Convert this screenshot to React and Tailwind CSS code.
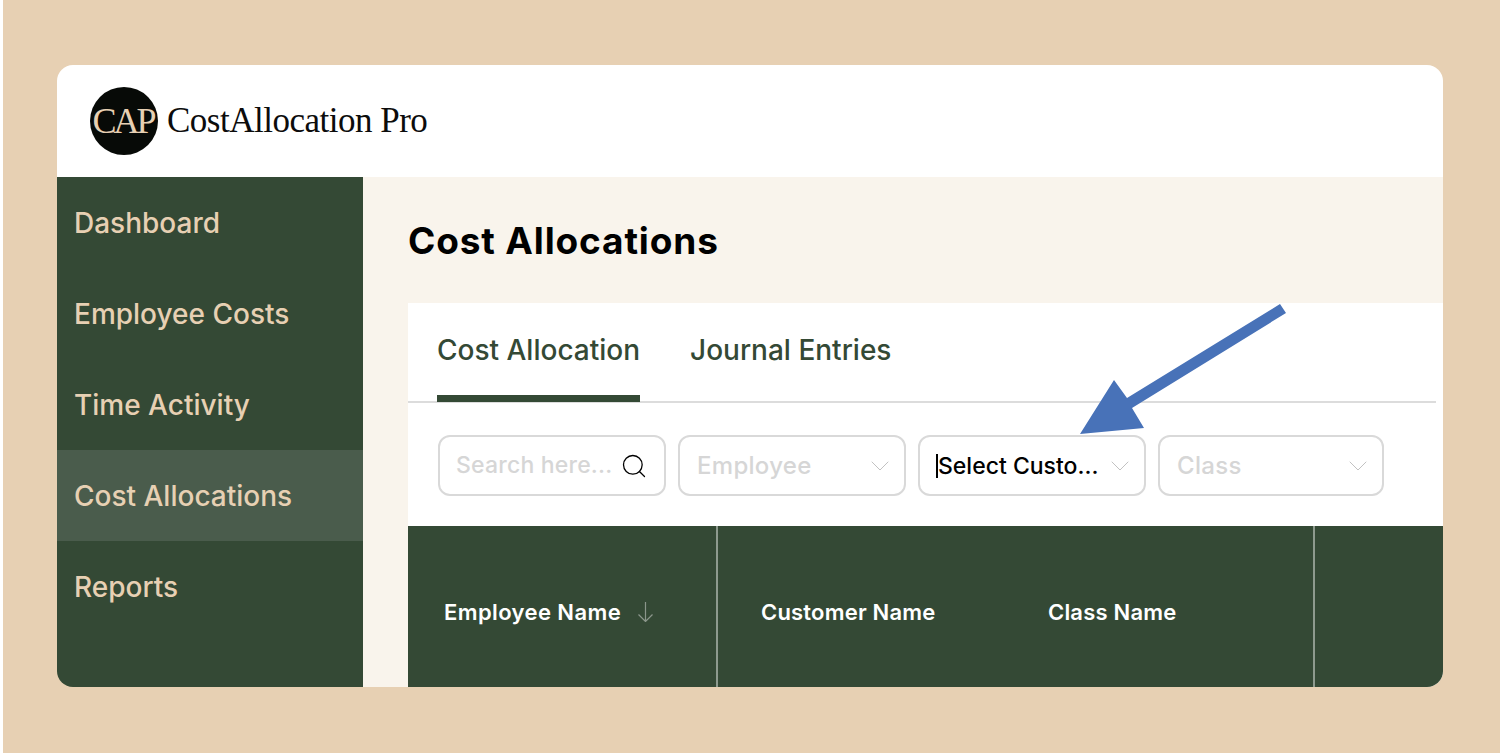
import React from 'react';
import { ChevronDown, Search } from 'lucide-react';

const uiFont = "font-['Inter','Noto_Sans',sans-serif]";

const navItems = ['Dashboard', 'Employee Costs', 'Time Activity', 'Cost Allocations', 'Reports'];

const Dropdown = ({ label, active, width }) => (
  <div className={`flex h-[61px] items-center justify-between rounded-[12px] border-2 border-[#d9d9d9] bg-white pl-[17px] pr-[8px] ${width}`}>
    <span className={`text-[23px] font-medium ${active ? 'border-l-2 border-black text-black leading-[24px] -ml-[1px]' : 'text-[24px] tracking-[0.3px] text-[#d6d6d6]'}`}>{label}</span>
    <ChevronDown className="h-[32px] w-[32px] text-[#bdbdbd]" strokeWidth={0.7} />
  </div>
);

export default function App() {
  return (
    <div className={`relative h-[754px] w-[1500px] overflow-hidden bg-white pb-[1px] pl-[3px] ${uiFont}`}>
      <div className="h-full w-full bg-[#e7d0b3] pl-[54px] pt-[65px]">
        <div className="flex h-[622px] w-[1386px] flex-col overflow-hidden rounded-[16px]">
          {/* Header */}
          <div className="flex h-[112px] shrink-0 items-center bg-white pl-[33px]">
            <div className="flex h-[68px] w-[68px] items-center justify-center rounded-full bg-[#070a07] pr-[2px] font-['Liberation_Serif',serif] text-[36px] tracking-[-3px] text-[#e7d0b3]">CAP</div>
            <span className="ml-[9px] font-['Liberation_Serif',serif] text-[35px] tracking-[-0.5px] text-[#0c0c0c]">CostAllocation Pro</span>
          </div>

          <div className="flex min-h-0 flex-1">
            {/* Sidebar */}
            <div className="w-[306px] shrink-0 bg-[#344935]">
              {navItems.map((item) => (
                <div
                  key={item}
                  className={`flex h-[91px] items-center pl-[17px] text-[28px] font-medium text-[#e7d0b3] ${item === 'Cost Allocations' ? 'bg-[#4a5c4c]' : ''}`}
                >
                  {item}
                </div>
              ))}
            </div>

            {/* Main */}
            <div className="min-w-0 flex-1 bg-[#f9f4ec] pl-[45px]">
              <h1 className="flex h-[126px] items-center pt-[1px] text-[37px] font-bold leading-none tracking-[0.85px] text-black">Cost Allocations</h1>
              <div className="bg-white">
                <div className="mr-[7px] flex h-[100px] border-b-2 border-[#dcdcdc] pl-[29px]">
                  <div className="flex h-[99px] flex-col">
                    <span className="flex flex-1 items-center pt-[2px] text-[28px] font-medium text-[#344935]">Cost Allocation</span>
                    <div className="h-[7px] bg-[#344935]" />
                  </div>
                  <div className="ml-[50px] flex h-[94px] items-center text-[28px] font-medium text-[#344935]">Journal Entries</div>
                </div>

                <div className="flex h-[123px] items-center gap-[12px] pl-[30px] pt-[2px]">
                  <div className="flex h-[61px] w-[228px] items-center justify-between rounded-[12px] border-2 border-[#d9d9d9] pl-[16px] pr-[16px]">
                    <span className="text-[23px] font-medium tracking-[0.2px] text-[#d6d6d6]">Search here...</span>
                    <Search className="h-[28px] w-[28px] text-black" strokeWidth={1.1} />
                  </div>
                  <Dropdown label="Employee" width="w-[228px]" />
                  <Dropdown label="Select Custo..." active width="w-[228px]" />
                  <Dropdown label="Class" width="w-[226px]" />
                </div>

                {/* Table head */}
                <div className="flex h-[162px] bg-[#344935] text-[22px] font-semibold tracking-[0.4px] text-white">
                  <div className="flex w-[310px] items-center border-r-2 border-[#8d9a8e] pl-[36px] pt-[10px]">
                    <span>Employee Name</span>
                    <svg className="ml-[17px]" width="15" height="20" viewBox="0 0 15 20" fill="none" stroke="#8b968b" strokeWidth="1.2">
                      <path d="M7.5 0V19.5M0.5 12.5L7.5 19.5L14.5 12.5" />
                    </svg>
                  </div>
                  <div className="flex w-[597px] items-center border-r-2 border-[#8d9a8e] pl-[43px] pt-[10px]">
                    <span className="w-[287px] tracking-[0.2px]">Customer Name</span>
                    <span className="tracking-[0.2px]">Class Name</span>
                  </div>
                  <div className="flex-1" />
                </div>
              </div>
            </div>
          </div>
        </div>
      </div>

      {/* Annotation arrow */}
      <svg className="pointer-events-none absolute left-0 top-0" width="1500" height="754" viewBox="0 0 1500 754">
        <polygon fill="#4872b8" points="1280,304 1286,313 1132,408 1144,428 1080,434 1114,380 1127,398" />
      </svg>
    </div>
  );
}
